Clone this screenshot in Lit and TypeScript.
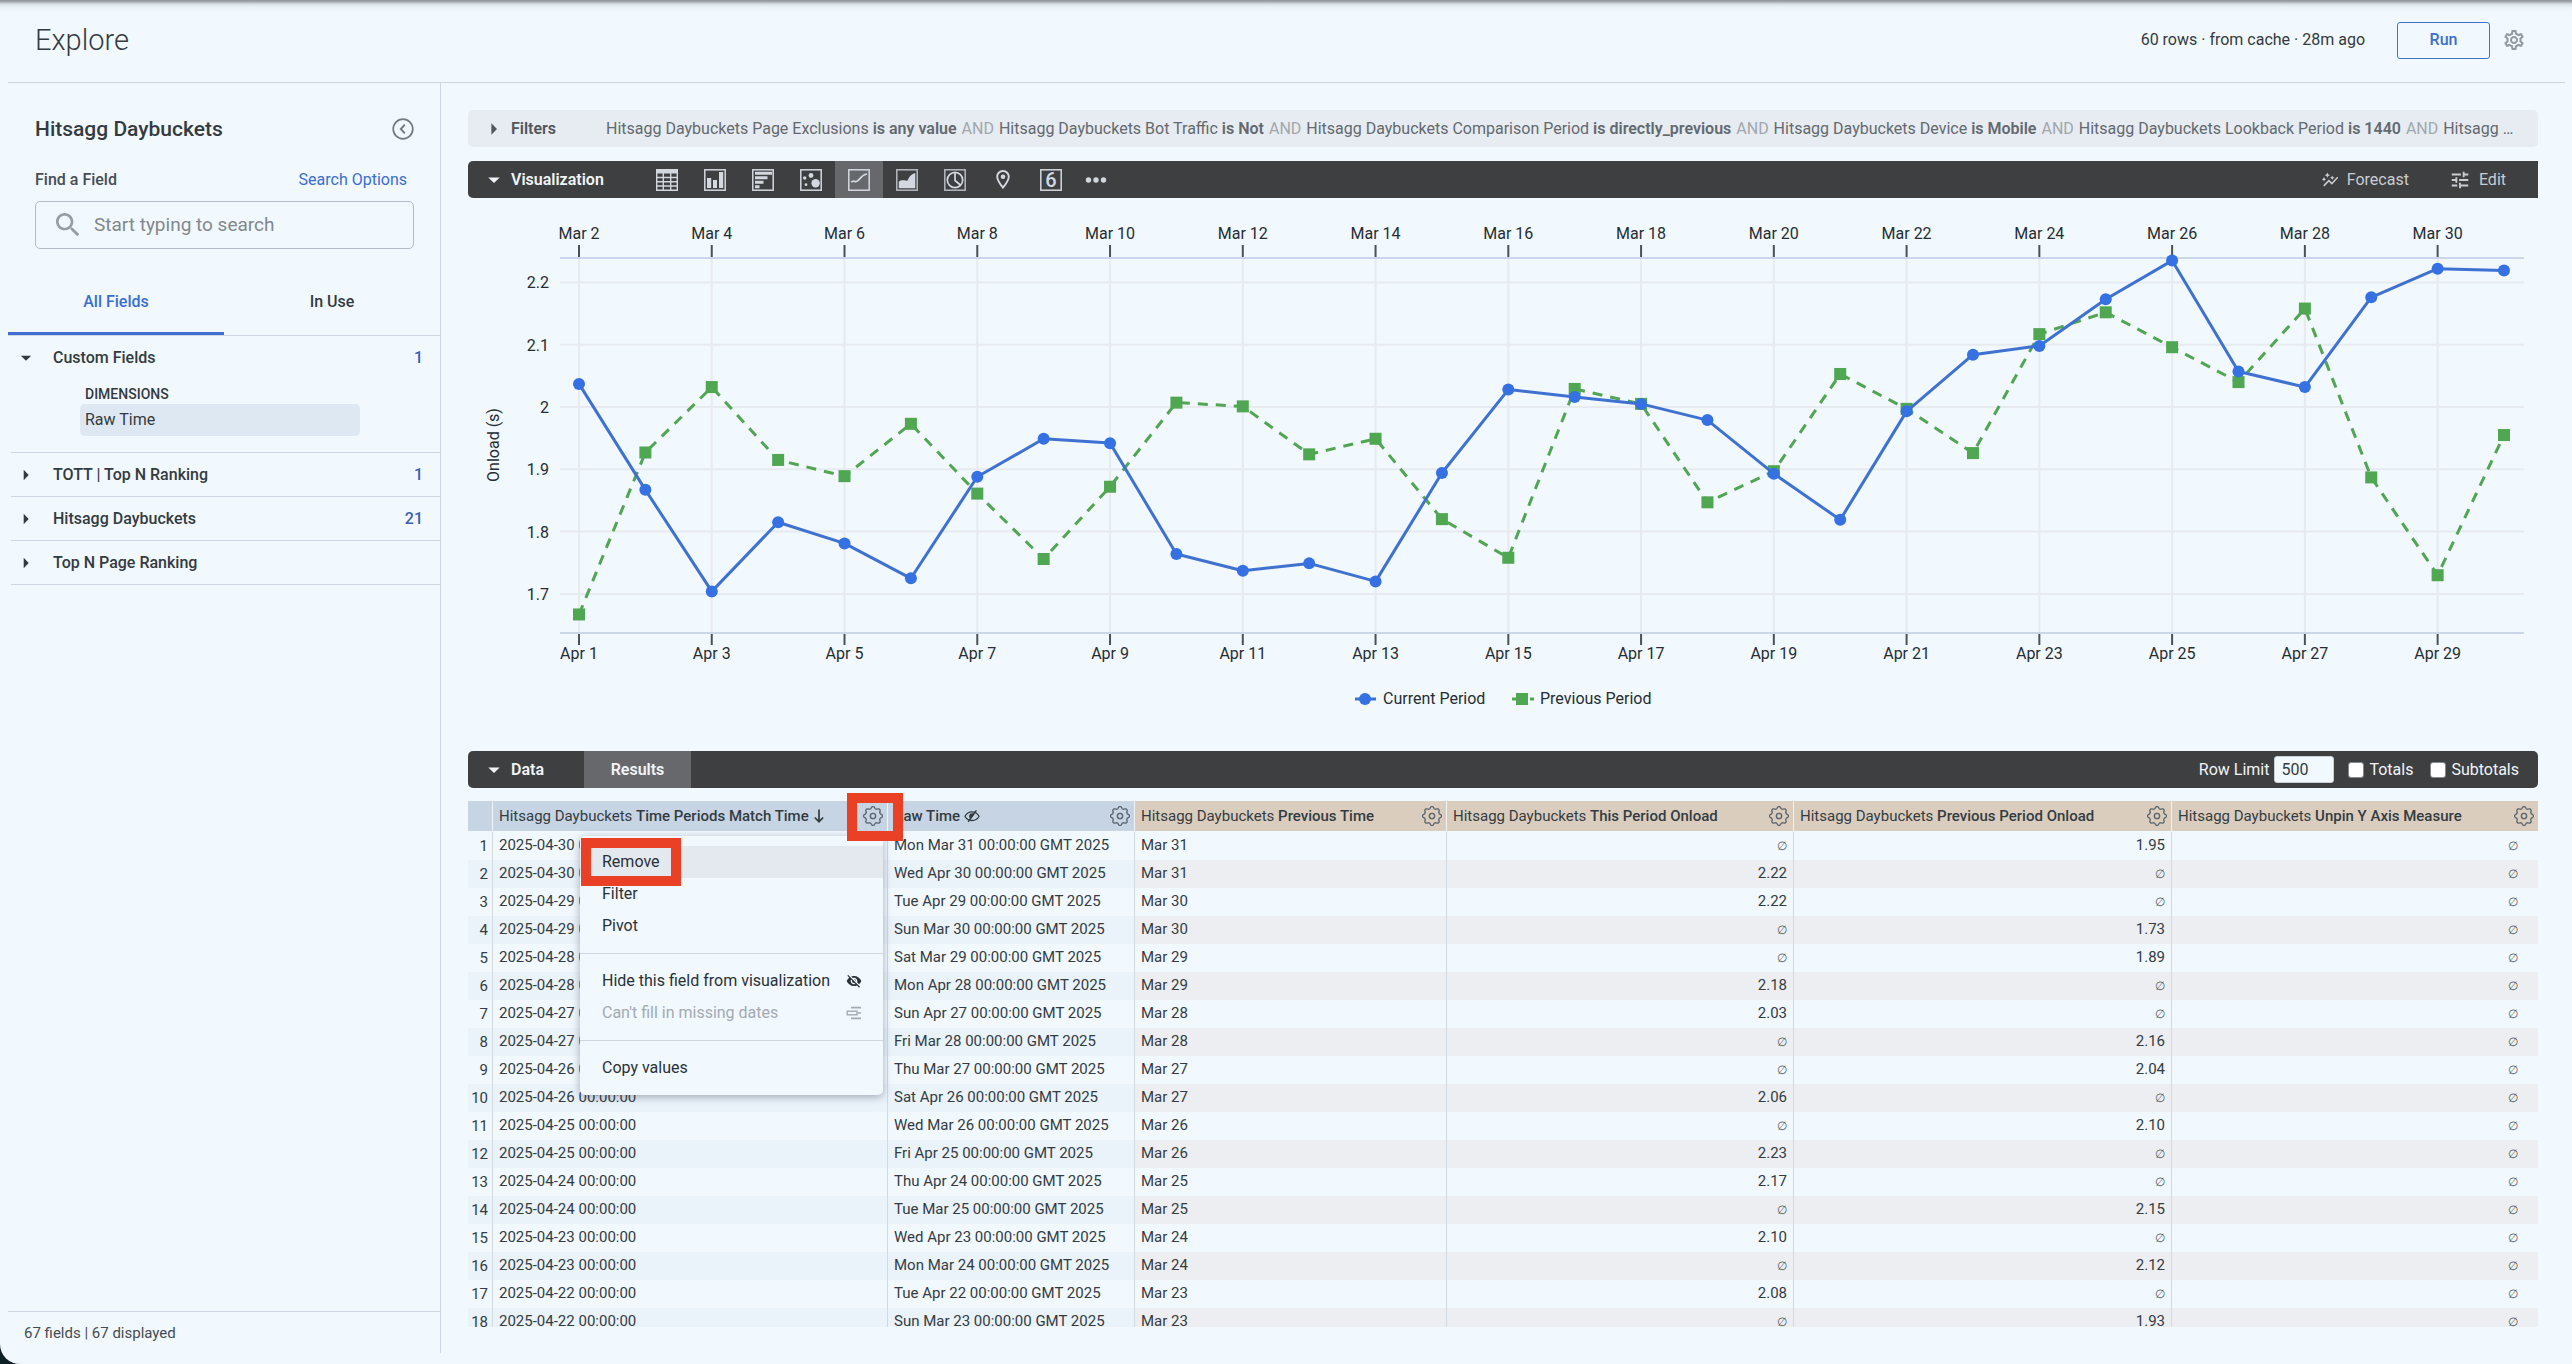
import { LitElement, html, svg, css, nothing } from "lit";
import { customElement } from "lit/decorators.js";
import { classMap } from "lit/directives/class-map.js";

const CURRENT = [
  2.037, 1.867, 1.704, 1.815, 1.781, 1.725, 1.888, 1.949, 1.942, 1.764, 1.737, 1.749, 1.72, 1.894, 2.028,
  2.016, 2.005, 1.979, 1.893, 1.819, 1.993, 2.084, 2.098, 2.173, 2.235, 2.057, 2.032, 2.176, 2.222, 2.219,
];
const PREVIOUS = [
  1.667, 1.927, 2.032, 1.915, 1.889, 1.973, 1.861, 1.756, 1.872, 2.007, 2.001, 1.924, 1.949, 1.82, 1.758,
  2.029, 2.005, 1.847, 1.897, 2.053, 1.997, 1.926, 2.117, 2.152, 2.096, 2.04, 2.158, 1.887, 1.73, 1.955,
];

interface Row {
  match: string;
  raw: string;
  previous: string;
  current?: string;
  prior?: string;
}

const row = (match: string, raw: string, previous: string, current?: string, prior?: string): Row => ({
  match: `2025-${match} 00:00:00`,
  raw: `${raw} 00:00:00 GMT 2025`,
  previous,
  current,
  prior,
});

const ROWS: Row[] = [
  row("04-30", "Mon Mar 31", "Mar 31", undefined, "1.95"),
  row("04-30", "Wed Apr 30", "Mar 31", "2.22"),
  row("04-29", "Tue Apr 29", "Mar 30", "2.22"),
  row("04-29", "Sun Mar 30", "Mar 30", undefined, "1.73"),
  row("04-28", "Sat Mar 29", "Mar 29", undefined, "1.89"),
  row("04-28", "Mon Apr 28", "Mar 29", "2.18"),
  row("04-27", "Sun Apr 27", "Mar 28", "2.03"),
  row("04-27", "Fri Mar 28", "Mar 28", undefined, "2.16"),
  row("04-26", "Thu Mar 27", "Mar 27", undefined, "2.04"),
  row("04-26", "Sat Apr 26", "Mar 27", "2.06"),
  row("04-25", "Wed Mar 26", "Mar 26", undefined, "2.10"),
  row("04-25", "Fri Apr 25", "Mar 26", "2.23"),
  row("04-24", "Thu Apr 24", "Mar 25", "2.17"),
  row("04-24", "Tue Mar 25", "Mar 25", undefined, "2.15"),
  row("04-23", "Wed Apr 23", "Mar 24", "2.10"),
  row("04-23", "Mon Mar 24", "Mar 24", undefined, "2.12"),
  row("04-22", "Tue Apr 22", "Mar 23", "2.08"),
  row("04-22", "Sun Mar 23", "Mar 23", undefined, "1.93"),
];

const FILTERS: [string, string][] = [
  ["Hitsagg Daybuckets Page Exclusions", "is any value"],
  ["Hitsagg Daybuckets Bot Traffic", "is Not"],
  ["Hitsagg Daybuckets Comparison Period", "is directly_previous"],
  ["Hitsagg Daybuckets Device", "is Mobile"],
  ["Hitsagg Daybuckets Lookback Period", "is 1440"],
];

/* Closed outline with n rounded lobes around (12,12). */
const lobedOutline = (n: number, radius: number, depth: number): string => {
  const steps = n * 16;
  const pts: string[] = [];
  for (let i = 0; i < steps; i++) {
    const a = (i / steps) * Math.PI * 2 - Math.PI / 2;
    const wave = Math.tanh(1.6 * Math.cos((i / steps) * Math.PI * 2 * n)) / Math.tanh(1.6);
    const r = radius + depth * wave;
    pts.push(`${(12 + r * Math.cos(a)).toFixed(2)} ${(12 + r * Math.sin(a)).toFixed(2)}`);
  }
  return `M${pts.join("L")}Z`;
};
const LOBED = lobedOutline(8, 9.2, 1);

const columnGear = html`<svg class="icon s22" viewBox="0 0 24 24" aria-hidden="true">
  <path d=${LOBED} fill="none" stroke="currentColor" stroke-width="1.4" stroke-linejoin="round" />
  <circle cx="12" cy="12" r="2.9" fill="none" stroke="currentColor" stroke-width="1.5" />
</svg>`;

const settingsIcon = html`<svg class="icon s24" viewBox="0 0 24 24" aria-hidden="true">
  <path fill="currentColor" d="M19.43 12.98c.04-.32.07-.64.07-.98 0-.34-.03-.66-.07-.98l2.11-1.65c.19-.15.24-.42.12-.64l-2-3.46c-.09-.16-.26-.25-.44-.25-.06 0-.12.01-.17.03l-2.49 1c-.52-.4-1.08-.73-1.69-.98l-.38-2.65C14.46 2.18 14.25 2 14 2h-4c-.25 0-.46.18-.49.42l-.38 2.65c-.61.25-1.17.59-1.69.98l-2.49-1c-.06-.02-.12-.03-.18-.03-.17 0-.34.09-.43.25l-2 3.46c-.13.22-.07.49.12.64l2.11 1.65c-.04.32-.07.65-.07.98 0 .33.03.66.07.98l-2.11 1.65c-.19.15-.24.42-.12.64l2 3.46c.09.16.26.25.44.25.06 0 .12-.01.17-.03l2.49-1c.52.4 1.08.73 1.69.98l.38 2.65c.03.24.24.42.49.42h4c.25 0 .46-.18.49-.42l.38-2.65c.61-.25 1.17-.59 1.69-.98l2.49 1c.06.02.12.03.18.03.17 0 .34-.09.43-.25l2-3.46c.12-.22.07-.49-.12-.64l-2.11-1.65zm-1.98-1.71c.04.31.05.52.05.73 0 .21-.02.43-.05.73l-.14 1.13.89.7 1.08.84-.7 1.21-1.27-.51-1.04-.42-.9.68c-.43.32-.84.56-1.25.73l-1.06.43-.16 1.13-.2 1.35h-1.4l-.19-1.35-.16-1.13-1.06-.43c-.43-.18-.83-.41-1.23-.71l-.91-.7-1.06.43-1.27.51-.7-1.21 1.08-.84.89-.7-.14-1.13c-.03-.31-.05-.54-.05-.74s.02-.43.05-.73l.14-1.13-.89-.7-1.08-.84.7-1.21 1.27.51 1.04.42.9-.68c.43-.32.84-.56 1.25-.73l1.06-.43.16-1.13.2-1.35h1.39l.19 1.35.16 1.13 1.06.43c.43.18.83.41 1.23.71l.91.7 1.06-.43 1.27-.51.7 1.21-1.07.85-.89.7.14 1.13zM12 8c-2.21 0-4 1.79-4 4s1.79 4 4 4 4-1.79 4-4-1.79-4-4-4zm0 6c-1.1 0-2-.9-2-2s.9-2 2-2 2 .9 2 2-.9 2-2 2z" />
</svg>`;

const searchIcon = html`<svg class="icon s32" viewBox="0 0 24 24" aria-hidden="true">
  <path fill="currentColor" d="M15.5 14h-.79l-.28-.27C15.41 12.59 16 11.11 16 9.5 16 5.91 13.09 3 9.5 3S3 5.91 3 9.5 5.91 16 9.5 16c1.61 0 3.09-.59 4.23-1.57l.27.28v.79l5 4.99L20.49 19l-4.99-5zm-6 0C7.01 14 5 11.99 5 9.5S7.01 5 9.5 5 14 7.01 14 9.5 11.99 14 9.5 14z" />
</svg>`;

const collapseIcon = html`<svg class="icon s22" viewBox="0 0 22 22" aria-hidden="true">
  <circle cx="11" cy="11" r="9.8" fill="none" stroke="currentColor" stroke-width="1.7" />
  <path d="M12.8 6.6 8.8 11l4 4.4" fill="none" stroke="currentColor" stroke-width="1.9" />
</svg>`;

const caretRight = html`<svg class="icon caret" viewBox="0 0 20 20" aria-hidden="true">
  <path d="M7.400 4.200 13 10l-5.600 5.800z" fill="currentColor" /></svg>`;
const caretDown = html`<svg class="icon caret" viewBox="0 0 20 20" aria-hidden="true">
  <path d="M4.300 7.400h11.400L10 13.100z" fill="currentColor" /></svg>`;

const sparkLine = html`<svg class="icon s18" viewBox="0 0 24 24" aria-hidden="true">
  <path fill="currentColor" d="M14.06 9.94L12 9l2.06-.94L15 6l.94 2.06L18 9l-2.06.94L15 12l-.94-2.06zM4 14l.94-2.06L7 11l-2.06-.94L4 8l-.94 2.06L1 11l2.06.94L4 14zm4.5-5l1.09-2.41L12 5.5 9.59 4.41 8.5 2 7.41 4.41 5 5.5l2.41 1.09L8.5 9zm-4 11.5l6-6.01 4 4L23 8.93l-1.41-1.41-7.09 7.97-4-4L3 19l1.5 1.5z" />
</svg>`;
const tuneIcon = html`<svg class="icon s22" viewBox="0 0 24 24" aria-hidden="true">
  <path fill="currentColor" d="M3 17v2h6v-2H3zM3 5v2h10V5H3zm10 16v-2h8v-2h-8v-2h-2v6h2zM7 9v2H3v2h4v2h2V9H7zm14 4v-2H11v2h10zm-6-4h2V7h4V5h-4V3h-2v6z" />
</svg>`;

const eyeOff = html`<svg class="icon s16" viewBox="0 0 24 24" aria-hidden="true">
  <path fill="currentColor" d="M12 7c2.76 0 5 2.24 5 5 0 .65-.13 1.26-.36 1.83l2.92 2.92c1.51-1.26 2.7-2.89 3.43-4.75-1.73-4.39-6-7.5-11-7.5-1.4 0-2.74.25-3.98.7l2.16 2.16C10.74 7.13 11.35 7 12 7zM2 4.27l2.28 2.28.46.46C3.08 8.3 1.78 10.02 1 12c1.73 4.39 6 7.5 11 7.5 1.55 0 3.03-.3 4.38-.84l.42.42L19.73 22 21 20.73 3.27 3 2 4.27zM7.53 9.8l1.55 1.55c-.05.21-.08.43-.08.65 0 1.66 1.34 3 3 3 .22 0 .44-.03.65-.08l1.55 1.55c-.67.33-1.41.53-2.2.53-2.76 0-5-2.24-5-5 0-.79.2-1.53.53-2.2zm4.31-.78l3.15 3.15.02-.16c0-1.66-1.34-3-3-3l-.17.01z" />
</svg>`;
const fillDates = html`<svg class="icon s16" viewBox="0 0 16 16" aria-hidden="true">
  <path d="M5 2.600h10M5 13.400h10M11.500 8H15" fill="none" stroke="currentColor" stroke-width="1.700" />
  <rect x="1.200" y="6.200" width="9.800" height="3.600" fill="none" stroke="currentColor" stroke-width="1.400" />
</svg>`;
const hiddenIcon = html`<svg class="icon s16" viewBox="0 0 16 16" aria-hidden="true">
  <path d="M.9 8.2C2.6 5.2 5.2 3.8 8 3.8c2.8 0 5.4 1.4 7.1 4.400-1.700 3-4.300 4.300-7.100 4.300-2.800 0-5.400-1.300-7.100-4.300z" fill="none" stroke="currentColor" stroke-width="1.300" />
  <path d="M8 5.2a3 3 0 0 0-1.600 5.500L10.400 6.200A3 3 0 0 0 8 5.200z" fill="currentColor" />
  <path d="M4.200 13.800 12.400 2.400" stroke="currentColor" stroke-width="1.500" />
</svg>`;
const sortArrow = html`<svg class="icon sort" viewBox="0 0 12 16" aria-hidden="true">
  <path d="M6 1.500v12M1.800 9.500 6 13.700l4.200-4.200" fill="none" stroke="currentColor" stroke-width="1.700" />
</svg>`;

const frame = svg`<rect x=".8" y=".8" width="20.4" height="20.4" fill="none" stroke="currentColor" stroke-width="1.500" />`;

const VIS_TYPES = [
  {
    name: "Table",
    art: svg`<path d="M0 0h22v4.500H0z" fill="currentColor" />
      <path d="M.7 4v17.300h20.600V4M0 8.500h22M0 12.800h22M0 17h22M7.300 4v18M14.700 4v18" fill="none" stroke="currentColor" stroke-width="1.400" />`,
  },
  {
    name: "Column",
    art: svg`${frame}<path d="M3 9h4.200v10H3zM9 11h4v8H9zM15 3h4.200v16H15z" fill="currentColor" />`,
  },
  {
    name: "Bar",
    art: svg`${frame}<path d="M3 2.800h17v3H3zM3 7.300h12.500v3H3zM3 11.800h8.500v3H3zM3 16.300h4.500v3H3z" fill="currentColor" />`,
  },
  {
    name: "Scatterplot",
    art: svg`${frame}<circle cx="4.700" cy="9" r="1.700" fill="currentColor" /><circle cx="11" cy="6.500" r="2.400" fill="currentColor" />
      <circle cx="6" cy="15.700" r="1.400" fill="currentColor" /><circle cx="15.600" cy="14.300" r="4.200" fill="currentColor" />`,
  },
  {
    name: "Line",
    active: true,
    art: svg`${frame}<path d="M3.200 13.300c2-2.600 3.200-.2 5.300-.8 3.500-1 4-6.500 10.500-7.500" fill="none" stroke="currentColor" stroke-width="1.700" />`,
  },
  {
    name: "Area",
    art: svg`<g opacity=".8">${frame}</g><path d="M2.800 19.300v-6.500c2-2 3.500-1.500 5.500-1.500l3 .5C13.500 7 15.500 5 19.300 4v15.300z" fill="currentColor" />`,
  },
  {
    name: "Pie",
    art: svg`<g opacity=".8">${frame}</g><circle cx="11" cy="11" r="7.700" fill="none" stroke="currentColor" stroke-width="1.700" />
      <path d="M11 3v8.500l6 5" fill="none" stroke="currentColor" stroke-width="1.700" />`,
  },
  {
    name: "Map",
    art: svg`<g transform="translate(-1 -1.500)"><path d="M12 2.500c-3.870 0-6.700 3-6.700 6.700 0 5 6.700 12.300 6.700 12.300s6.700-7.300 6.700-12.300c0-3.700-2.830-6.700-6.700-6.700zM7.200 9.200c0-2.660 2.140-4.800 4.800-4.800s4.800 2.140 4.800 4.800c0 2.780-2.780 6.700-4.800 9.400C10 15.900 7.200 12 7.200 9.200z" fill="currentColor" />
      <circle cx="12" cy="9.200" r="2.300" fill="currentColor" /></g>`,
  },
  {
    name: "Single Value",
    art: svg`${frame}<text class="six" x="11" y="18" text-anchor="middle">6</text>`,
  },
];

@customElement("period-chart")
class PeriodChart extends LitElement {
  static styles = css`
    :host { display: block; }
    svg { display: block; width: 100%; height: auto; }
    text { font: 400 16px Roboto, sans-serif; fill: #262d33; }
    .y { text-anchor: end; }
    .mid { text-anchor: middle; }
    .grid { stroke: #e7eaef; stroke-width: 2; }
    .axis { stroke: #ccd6eb; stroke-width: 2; }
    .tick { stroke: #4a5256; stroke-width: 2; }
    .line { fill: none; stroke-width: 3; stroke-linejoin: round; }
    .blue { stroke: #3f72d0; }
    .green { stroke: #52a552; stroke-dasharray: 10 8; }
    .dot { fill: #3571e3; }
    .square { fill: #4fa752; }
  `;

  render() {
    const x = (i: number) => 111 + (i * 1925) / 29;
    const y = (v: number) => 209 - (v - 2) * 623;
    const path = (d: number[]) => d.map((v, i) => `${i ? "L" : "M"}${x(i).toFixed(1)} ${y(v).toFixed(1)}`).join("");
    const odd = Array.from({ length: 15 }, (_, k) => k * 2);
    return html`<svg viewBox="0 0 2070 553" role="img" aria-label="Onload by period">
      ${[2.2, 2.1, 2, 1.9, 1.8, 1.7].map(
        (v) => svg`<line class="grid" x1="92" x2="2056" y1=${y(v)} y2=${y(v)} />
          <text class="y" x="81" y=${y(v) + 6}>${v}</text>`
      )}
      ${odd.map(
        (i) => svg`<line class="grid" x1=${x(i)} x2=${x(i)} y1="60" y2="435" />
          <line class="tick" x1=${x(i)} x2=${x(i)} y1="47" y2="59" />
          <line class="tick" x1=${x(i)} x2=${x(i)} y1="436" y2="447" />
          <text class="mid" x=${x(i)} y="41">Mar ${i + 2}</text>
          <text class="mid" x=${x(i)} y="461">Apr ${i + 1}</text>`
      )}
      <line class="axis" x1="92" x2="2056" y1="60" y2="60" />
      <line class="axis" x1="92" x2="2056" y1="435" y2="435" />
      <text class="mid" transform="translate(31 247) rotate(-90)">Onload (s)</text>
      <path class="line green" d=${path(PREVIOUS)} />
      ${PREVIOUS.map((v, i) => svg`<rect class="square" x=${x(i) - 6} y=${y(v) - 6} width="12" height="12" />`)}
      <path class="line blue" d=${path(CURRENT)} />
      ${CURRENT.map((v, i) => svg`<circle class="dot" cx=${x(i)} cy=${y(v)} r="6" />`)}
      <line class="line blue" x1="887" x2="908" y1="501" y2="501" />
      <circle class="dot" cx="897" cy="501" r="6" />
      <text x="915" y="506">Current Period</text>
      <line class="line green" x1="1044" x2="1066" y1="501" y2="501" />
      <rect class="square" x="1048" y="495" width="12" height="12" />
      <text x="1072" y="506">Previous Period</text>
    </svg>`;
  }
}

@customElement("results-table")
class ResultsTable extends LitElement {
  static styles = css`
    :host { display: block; position: relative; min-height: 0; flex: 1; color: #343c42; font: 400 15px/20px Roboto, sans-serif; }
    .clip { height: 100%; overflow: hidden; }
    table { width: 100%; border-collapse: separate; border-spacing: 0; table-layout: fixed; }
    .num { width: 24px; }
    .match { width: 395px; }
    .raw { width: 247px; }
    .prev { width: 312px; }
    .cur { width: 347px; }
    .prior { width: 378px; }
    th { height: 30px; padding: 0; font-weight: 400; text-align: left; background: #c6d4e4; border-bottom: 1px solid #f1f8fe; box-sizing: content-box; }
    th.measure { background: #dacdbe; }
    th + th { border-left: 1px solid #eef3f8; }
    .head { display: flex; align-items: center; justify-content: space-between; padding: 0 3px 0 6px; white-space: nowrap; }
    .name { display: flex; align-items: center; gap: 4px; }
    b { font-weight: 500; }
    button { display: flex; padding: 0; border: 0; background: none; color: #5b646c; font: inherit; }
    td { height: 28px; padding: 0 6px 2px; box-sizing: border-box; white-space: nowrap; }
    td + td { border-left: 1px solid #d3d9e1; }
    td.n { padding: 0 4px 0 0; text-align: right; }
    td.r { text-align: right; }
    td.last { padding-right: 20px; }
    .null { font-size: 12px; color: #565d62; }
    tr:nth-child(even) td { background: #eaf2fa; }
    tr:nth-child(even) td.m { background: #edeef1; }
    .icon { display: block; flex: none; }
    .s22 { width: 22px; height: 22px; }
    .s16 { width: 16px; height: 16px; }
    .sort { width: 12px; height: 16px; }
    .menu { position: absolute; left: 112px; top: 35px; width: 303px; background: #f1f8fe; border-radius: 5px; box-shadow: 0 2px 8px rgba(50, 60, 80, 0.4); }
    .group { display: flex; flex-direction: column; padding: 10px 0 11px; }
    .group + .group { border-top: 1px solid #ced5df; padding: 11px 0; }
    .menu button { height: 32px; align-items: center; justify-content: space-between; padding: 0 21px 0 22px; font-size: 16px; color: #2a3137; }
    .menu .hover { background: #e4e8ef; }
    .menu button:disabled { color: #a4aab1; }
    .mark { position: absolute; border: 10px solid #ea4025; box-sizing: border-box; height: 48px; pointer-events: none; }
    .mark.gear { left: 379px; top: -8px; width: 56px; }
    .mark.remove { left: 113px; top: 37px; width: 100px; }
  `;

  private heading(view: string, name: string, measure: boolean, extra: unknown = nothing) {
    return html`<th scope="col" class=${classMap({ measure })}>
      <div class="head">
        <span class="name"><span>${view} <b>${name}</b></span>${extra}</span>
        <button aria-label="${name} options">${columnGear}</button>
      </div>
    </th>`;
  }

  private value(v?: string) {
    return v ?? html`<span class="null">∅</span>`;
  }

  render() {
    return html`
      <div class="clip">
        <table>
          <colgroup><col class="num" /><col class="match" /><col class="raw" /><col class="prev" /><col class="cur" /><col class="prior" /><col /></colgroup>
          <thead>
            <tr>
              <th></th>
              ${this.heading("Hitsagg Daybuckets", "Time Periods Match Time", false, sortArrow)}
              ${this.heading("", "Raw Time", false, hiddenIcon)}
              ${this.heading("Hitsagg Daybuckets", "Previous Time", true)}
              ${this.heading("Hitsagg Daybuckets", "This Period Onload", true)}
              ${this.heading("Hitsagg Daybuckets", "Previous Period Onload", true)}
              ${this.heading("Hitsagg Daybuckets", "Unpin Y Axis Measure", true)}
            </tr>
          </thead>
          <tbody>
            ${ROWS.map(
              (r, i) => html`<tr>
                <td class="n">${i + 1}</td>
                <td>${r.match}</td>
                <td>${r.raw}</td>
                <td class="m">${r.previous}</td>
                <td class="m r">${this.value(r.current)}</td>
                <td class="m r">${this.value(r.prior)}</td>
                <td class="m r last">${this.value()}</td>
              </tr>`
            )}
          </tbody>
        </table>
      </div>
      <div class="menu" role="menu">
        <div class="group">
          <button class="hover" role="menuitem">Remove</button>
          <button role="menuitem">Filter</button>
          <button role="menuitem">Pivot</button>
        </div>
        <div class="group">
          <button role="menuitem">Hide this field from visualization ${eyeOff}</button>
          <button role="menuitem" disabled>Can't fill in missing dates ${fillDates}</button>
        </div>
        <div class="group"><button role="menuitem">Copy values</button></div>
      </div>
      <div class="mark gear"></div>
      <div class="mark remove"></div>
    `;
  }
}

@customElement("field-picker")
class FieldPicker extends LitElement {
  static styles = css`
    :host { display: flex; flex-direction: column; flex: none; width: 432px; border-right: 1px solid #cdd6e2; color: #343b40; font: 500 16px/20px Roboto, sans-serif; }
    .icon { display: block; flex: none; }
    .s22 { width: 22px; height: 22px; }
    .s32 { width: 32px; height: 32px; }
    .caret { width: 18px; height: 18px; }
    button { border: 0; background: none; padding: 0; font: inherit; color: inherit; }
    .top { padding: 33px 26px 0 27px; }
    .line { display: flex; align-items: center; justify-content: space-between; }
    h2 { margin: 0; font-size: 21px; line-height: 26px; font-weight: 500; }
    .fold { color: #73797e; }
    .find { margin-top: 28px; padding-right: 7px; }
    .find label { color: #474e53; }
    .find button { font-weight: 400; color: #3a6fd0; }
    .search { display: flex; align-items: center; gap: 10px; height: 46px; margin-top: 11px; padding: 0 16px; border: 1px solid #b3bcc8; border-radius: 5px; color: #989da2; }
    .search input { flex: 1; min-width: 0; border: 0; outline: 0; background: none; padding: 0; font: 400 19px/24px Roboto, sans-serif; color: #343b40; }
    .search input::placeholder { color: #83888d; opacity: 1; }
    .tabs { display: grid; grid-template-columns: 1fr 1fr; height: 67px; margin-top: 19px; border-bottom: 1px solid #cdd6e2; }
    .tabs button { border-bottom: 3px solid transparent; padding-top: 4px; }
    .tabs .on { color: #3a6fd0; border-color: #3f6fd0; }
    .section { margin-left: 3px; border-bottom: 1px solid #cdd6e2; }
    .section > button { display: flex; align-items: center; gap: 18px; width: 100%; height: 43px; padding: 0 17px 0 6px; text-align: left; }
    .label { flex: 1; }
    .count { color: #3a5fb4; }
    .inner { padding: 5px 80px 16px 69px; }
    .kind { padding-left: 5px; font-size: 14px; }
    .field { display: block; width: 100%; height: 32px; padding-left: 5px; border-radius: 5px; background: #dee8f2; text-align: left; font-weight: 400; }
    .foot { margin-top: auto; padding: 11px 16px 10px; border-top: 1px solid #cdd6e2; font-size: 15px; font-weight: 400; color: #454c51; }
  `;

  private section(name: string, count: string, open = false) {
    return html`<div class="section">
      <button aria-expanded=${open ? "true" : "false"}>
        ${open ? caretDown : caretRight}<span class="label">${name}</span><span class="count">${count}</span>
      </button>
      ${open
        ? html`<div class="inner"><div class="kind">DIMENSIONS</div><button class="field">Raw Time</button></div>`
        : nothing}
    </div>`;
  }

  render() {
    return html`
      <div class="top">
        <div class="line"><h2>Hitsagg Daybuckets</h2><button class="fold" aria-label="Collapse field picker">${collapseIcon}</button></div>
        <div class="line find"><label for="find">Find a Field</label><button>Search Options</button></div>
        <div class="search">${searchIcon}<input id="find" type="text" placeholder="Start typing to search" /></div>
      </div>
      <div class="tabs" role="tablist">
        <button class="on" role="tab" aria-selected="true">All Fields</button>
        <button role="tab" aria-selected="false">In Use</button>
      </div>
      ${this.section("Custom Fields", "1", true)} ${this.section("TOTT | Top N Ranking", "1")}
      ${this.section("Hitsagg Daybuckets", "21")} ${this.section("Top N Page Ranking", "")}
      <div class="foot">67 fields | 67 displayed</div>
    `;
  }
}

@customElement("app-root")
class AppRoot extends LitElement {
  static styles = css`
    :host { display: block; background: #0d2026; font: 400 16px/20px Roboto, sans-serif; color: #343b40; }
    .window { display: flex; flex-direction: column; height: 100vh; box-sizing: border-box; padding: 0 7px 11px 8px; border-radius: 0 0 0 20px; background: linear-gradient(#8b9096 0, #a9aeb4 2px, #d8dfe6 4px, #edf4fa 8px, #f1f8fe 13px); }
    header { display: flex; align-items: center; flex: none; height: 83px; box-sizing: border-box; padding: 0 39px 2px 27px; border-bottom: 1px solid #cdd6e2; }
    h1 { flex: 1; margin: 0; font-size: 29px; line-height: 36px; font-weight: 300; }
    button { border: 0; background: none; padding: 0; font: inherit; color: inherit; }
    .run { width: 93px; height: 37px; margin: 0 12px 0 32px; border: 1px solid #4273cc; border-radius: 3px; color: #3a6fd0; font-weight: 500; }
    .gear { color: #94999e; }
    .icon { display: block; flex: none; }
    .s18 { width: 18px; height: 18px; }
    .s22 { width: 22px; height: 22px; }
    .s24 { width: 24px; height: 24px; }
    .caret { width: 20px; height: 20px; }
    .body { display: flex; flex: 1; min-height: 0; }
    main { display: flex; flex-direction: column; flex: 1; min-width: 0; padding: 27px 27px 26px; }
    .bar { display: flex; align-items: center; flex: none; height: 37px; border-radius: 5px; background: #3e3f41; color: #f1f4f8; }
    .title { display: flex; align-items: center; gap: 7px; flex: none; box-sizing: border-box; padding-left: 16px; font-weight: 600; }
    .filters { background: #e6ecf2; color: #64696e; }
    .filters .title { width: 138px; color: #50565b; }
    .query { white-space: nowrap; overflow: hidden; text-overflow: ellipsis; }
    .query b { font-weight: 600; }
    .query i { margin: 0 1px; font-style: normal; color: #a2a7ad; }
    .vis { margin-top: 14px; border-radius: 5px 0 0 5px; }
    .vis .title { width: 175px; }
    .types { display: flex; height: 100%; }
    .types button { display: grid; place-items: center; width: 48px; color: #d3d8e0; }
    .types .on { background: #67686c; }
    .types .more { width: 41px; }
    .six { font: 500 20px Roboto, sans-serif; fill: currentColor; }
    .spacer { flex: 1; }
    .tool { display: flex; align-items: center; gap: 8px; color: #c9cdd2; }
    .tools { display: flex; gap: 40px; padding-right: 32px; }
    .data { margin-bottom: 13px; }
    .data .title { width: 116px; }
    .results { width: 107px; height: 100%; background: #67686c; font-weight: 600; }
    .controls { display: flex; align-items: center; padding-right: 19px; }
    .limit { width: 60px; height: 27px; margin: 0 14px 0 5px; box-sizing: border-box; padding: 0 6px; border: 1px solid #c9d0d8; border-radius: 3px; background: #f1f8fe; color: #343b40; font: inherit; }
    .check { display: flex; align-items: center; gap: 5px; }
    .check + .check { margin-left: 17px; }
    .check input { appearance: none; width: 16px; height: 16px; margin: 0; background: #fff; border: 1px solid #85888c; border-radius: 3px; }
  `;

  render() {
    return html`<div class="window">
      <header>
        <h1>Explore</h1>
        <span>60 rows · from cache · 28m ago</span>
        <button class="run">Run</button>
        <button class="gear" aria-label="Explore actions">${settingsIcon}</button>
      </header>
      <div class="body">
        <field-picker></field-picker>
        <main>
          <div class="bar filters">
            <button class="title" aria-expanded="false">${caretRight}Filters</button>
            <div class="query">${FILTERS.map(([f, c]) => html`${f} <b>${c}</b> <i>AND</i> `)}Hitsagg …</div>
          </div>
          <div class="bar vis">
            <button class="title" aria-expanded="true">${caretDown}Visualization</button>
            <div class="types">
              ${VIS_TYPES.map(
                (t) => html`<button class=${classMap({ on: !!t.active })} aria-label=${t.name}>
                  <svg class="icon s22" viewBox="0 0 22 22">${t.art}</svg>
                </button>`
              )}
              <button class="more" aria-label="More visualizations">
                <svg class="icon s22" viewBox="0 0 22 22"><g fill="currentColor"><circle cx="3.500" cy="11" r="2.700" /><circle cx="11" cy="11" r="2.700" /><circle cx="18.500" cy="11" r="2.700" /></g></svg>
              </button>
            </div>
            <div class="spacer"></div>
            <div class="tools">
              <button class="tool">${sparkLine}Forecast</button>
              <button class="tool">${tuneIcon}Edit</button>
            </div>
          </div>
          <period-chart></period-chart>
          <div class="bar data">
            <button class="title" aria-expanded="true">${caretDown}Data</button>
            <button class="results">Results</button>
            <div class="spacer"></div>
            <div class="controls">
              <label for="limit">Row Limit</label><input class="limit" id="limit" type="text" value="500" />
              <label class="check"><input type="checkbox" />Totals</label>
              <label class="check"><input type="checkbox" />Subtotals</label>
            </div>
          </div>
          <results-table></results-table>
        </main>
      </div>
    </div>`;
  }
}
